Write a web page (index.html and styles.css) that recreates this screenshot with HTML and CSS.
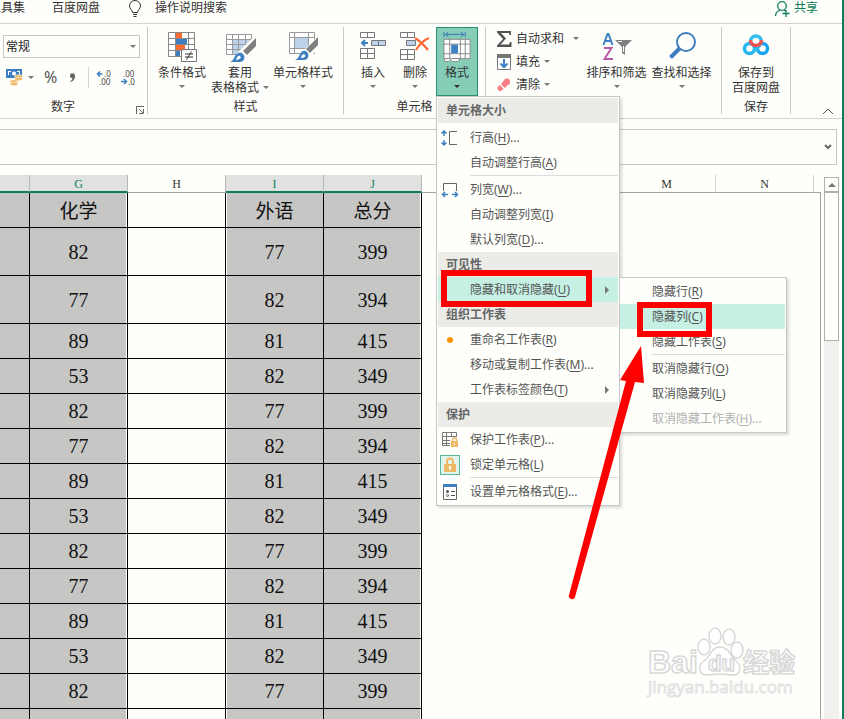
FILE: index.html
```html
<!DOCTYPE html>
<html lang="zh-CN">

<head>
    <meta charset="utf-8">
    <title>成绩表 - Excel</title>
    <link rel="stylesheet" href="styles.css">
</head>

<body>
    <div class="app">
        <nav class="tabs">
            <a href="#" class="tab">工具集</a>
            <a href="#" class="tab">百度网盘</a>
            <a href="#" class="tab tell-me">
                <svg width="16" height="17" viewBox="0 0 16 17" fill="none" stroke="#333"><path d="M5.500 12.500C5.500 10 2.500 9 2.500 6a5.500 5.500 0 0 1 11 0c0 3-3 4-3 6.500zM6 14.500h4M6.500 16.500h3" /></svg>
                操作说明搜索
            </a>
            <a href="#" class="tab share">
                <svg width="16" height="17" viewBox="0 0 16 17" fill="none" stroke="#107c5b" stroke-width="1.300"><circle cx="8" cy="6" r="4.300" /><path d="M1.500 16c0-3 2-5 4.500-6M10 10l1.500 1M12 10v7M8.500 13.500h7" /></svg>
                共享
            </a>
        </nav>

        <div class="ribbon">
            <section class="group number-group">
                <div class="number-body">
                    <div class="format-select">
                        <select aria-label="数字格式">
                            <option>常规</option>
                        </select>
                        <i class="caret"></i>
                    </div>
                    <div class="number-tools">
                        <button class="tool money" aria-label="会计数字格式">
                            <svg width="17" height="17" viewBox="0 0 17 17"><path fill="#3e7fc1" d="M0 0h16v9H0z" /><path fill="#fff" d="M2 2h3v1H3v3H2zM11 2h3v4h-1V3h-2z" /><circle cx="8" cy="4.500" r="2" fill="#fff" /><g fill="#efb965" stroke="#fff" stroke-width=".5"><ellipse cx="12.500" cy="7.500" rx="4" ry="1.700" /><ellipse cx="12.500" cy="10" rx="4" ry="1.700" /><ellipse cx="8" cy="12.500" rx="4" ry="1.700" /><ellipse cx="8" cy="15" rx="4" ry="1.700" /></g></svg>
                            <i class="caret"></i>
                        </button>
                        <button class="tool percent">%</button>
                        <button class="tool comma" aria-label="千位分隔样式">
                            <svg width="7" height="9" viewBox="0 0 7 9"><path fill="#666" d="M1 3a2 2 0 0 1 5-.5C6.300 5 5 8 1.500 9l-.3-.8C3 7.500 3.500 6 3.300 5 2 5 1 4.500 1 3z" /></svg>
                        </button>
                        <span class="tool-line"></span>
                        <button class="tool decimal" aria-label="增加小数位数">
                            <svg width="16" height="16" viewBox="0 0 16 16"><path d="M6.500 4H1.500M4 1.500L1.500 4 4 6.500" fill="none" stroke="#3e7fc1" stroke-width="1.500" /><text x="8" y="7">.0</text><text x="3" y="15">.00</text></svg>
                        </button>
                        <button class="tool decimal" aria-label="减少小数位数">
                            <svg width="16" height="16" viewBox="0 0 16 16"><path d="M1 11.500h5.500M4 9l2.500 2.500L4 14" fill="none" stroke="#3e7fc1" stroke-width="1.500" /><text x="3" y="7">.00</text><text x="8" y="15">.0</text></svg>
                        </button>
                    </div>
                </div>
                <div class="group-name">数字
                    <button class="launcher" aria-label="数字格式设置">
                        <svg width="8" height="8" viewBox="0 0 8 8" fill="none" stroke="#666"><path d="M.5 8V.5H8M3 3l4 4M7.500 3v4.500H3" /></svg>
                    </button>
                </div>
            </section>

            <section class="group">
                <div class="group-body styles-body">
                    <button class="big">
                        <svg width="30" height="30" viewBox="0 0 30 30"><path fill="#fff" stroke="#888" d="M1.500.500h26v24h-26zM8.500 0v24M21.500 0v24M1.500 6.500h26M1.500 12.500h26M1.500 18.500h26" /><path fill="#ff6a33" d="M9 1h6v5H9zM9 13h9v5H9z" /><path fill="#3e7fc1" d="M9 7h11v5H9zM9 19h4v5H9z" /><path fill="#fff" stroke="#777" d="M14.500 17.500h15v12h-15z" /><path stroke="#333" d="M18 22h8M18 25h8M24.500 19.500l-5 8" /></svg>
                        <span>条件格式</span>
                        <i class="caret"></i>
                    </button>
                    <button class="big">
                        <svg width="30" height="30" viewBox="0 0 30 30"><path fill="#fff" d="M1 2h26v20H1z" /><path fill="#bcd2eb" d="M8 8h19v14H8z" /><path fill="none" stroke="#999" d="M1.500 2.500h25v20h-25zM7.500 2v20M13.500 2v20M20.500 2v20M1 7.500h25M1 12.500h25M1 17.500h25" /><path fill="#fefffb" d="M31 3L14 19l-9 11h14l12-12z" /><path fill="#808080" d="M31 6v8l-9 9-4-4z" /><path fill="#3e7fc1" d="M5 30c3-1 4-4 5-6s5-5 8-2 1 8-3 8z" /><path fill="#fefffb" d="M11 28c.5-3 2-4 3.500-4.500l1.500 2c-1 1.500-3 2.500-5 2.500z" /></svg>
                        <span>套用</span>
                        <span class="with-caret">表格格式 <i class="caret"></i></span>
                    </button>
                    <button class="big wide">
                        <svg width="30" height="30" viewBox="0 0 30 30"><path fill="#fff" stroke="#999" d="M1.500.5h25v21h-25zM6.500 0v21M20.500 0v21M1 5.500h25M1 16.500h25" /><path fill="#bcd2eb" d="M7 6h13v10H7z" /><path fill="#fefffb" d="M31 3L17 17l-11 11h13l12-12z" /><path fill="#808080" d="M30 5v8l-8 8-4-4z" /><path fill="#3e7fc1" d="M7 28c3-1 4-4 5-6s4-5 7-2 1 8-3 8z" /><path fill="#fefffb" d="M13 26c.5-3 1.500-3.500 3-4l1.500 2c-1 1.500-2.500 2-4.500 2z" /></svg>
                        <span>单元格样式</span>
                        <i class="caret"></i>
                    </button>
                </div>
                <div class="group-name">样式</div>
            </section>

            <section class="group">
                <div class="group-body cells-body">
                    <button class="big narrow">
                        <svg width="27" height="30" viewBox="0 0 27 30"><path fill="#fff" stroke="#777" d="M.5.500h14v5H.5zM7.500.5v5M.5 16.500h14v10H.5zM7.500 16.500v10M.5 21.500h14" /><path fill="#bcd2eb" stroke="#777" d="M11.500 8.500h14v5h-14zM18.500 8.500v5" /><path fill="none" stroke="#3e7fc1" stroke-width="2" d="M8 11H2M5 8l-3 3 3 3" /></svg>
                        <span>插入</span>
                        <i class="caret"></i>
                    </button>
                    <button class="big narrow">
                        <svg width="30" height="30" viewBox="0 0 30 30"><path fill="#fff" stroke="#777" d="M.5.500h14v5H.5zM7.500.5v5M.5 17.500h14v10H.5zM7.500 17.500v10M.5 22.500h14" /><path fill="#bcd2eb" stroke="#777" d="M6.500 8.500h9v5h-9z" /><path fill="none" stroke="#ff6a33" stroke-width="2.200" d="M15 6c5 3 9 7 13 12M29 6c-5 2-10 7-13 12" /></svg>
                        <span>删除</span>
                        <i class="caret"></i>
                    </button>
                    <div class="menu-anchor">
                        <button class="big narrow open" aria-haspopup="true" aria-expanded="true">
                            <svg width="30" height="31" viewBox="0 0 30 31"><path fill="none" stroke="#3672b9" d="M1.500 0v5M23.500 0v5M3 2.500h19M6 0L3 2.500 6 5M19 0l3 2.500L19 5" /><path fill="#fff" stroke="#888" d="M1.500 7.500h27v20h-27zM7.500 7v20M18.500 7v20M23.500 7v20M1 12.500h27M1 22.500h27" /><path fill="#3e7fc1" d="M9 13h7v9H9z" /><path fill="#fff" stroke="#888" d="M2 27.500h5.500c1 0 1-1 2 0h9l-3 3h-5l-2-2-2 2H2z" /></svg>
                            <span>格式</span>
                            <i class="caret"></i>
                        </button>

                        <ul class="menu format-menu">
                            <li class="menu-title first">单元格大小</li>
                            <li><button class="item">
                                <span class="icon"><svg width="18" height="16" viewBox="0 0 18 16" fill="none"><path stroke="#666" d="M16 1.500H8.500v13H16" /><path stroke="#3e7fc1" stroke-width="1.500" d="M3 1v5M3 10v5M.5 3.500L3 1l2.500 2.500M.5 12.500L3 15l2.500-2.500" /></svg></span>行高(<u>H</u>)...</button></li>
                            <li><button class="item"><span class="icon"></span>自动调整行高(<u>A</u>)</button></li>
                            <li class="line"></li>
                            <li><button class="item">
                                <span class="icon"><svg width="18" height="16" viewBox="0 0 18 16" fill="none"><path stroke="#666" d="M2.500 9V1.500h13V9" /><path stroke="#3e7fc1" stroke-width="1.500" d="M1.500 12.500H7M11 12.500h5.500M4 10l-2.500 2.500L4 15M14 10l2.500 2.500L14 15" /></svg></span>列宽(<u>W</u>)...</button></li>
                            <li><button class="item"><span class="icon"></span>自动调整列宽(<u>I</u>)</button></li>
                            <li><button class="item"><span class="icon"></span>默认列宽(<u>D</u>)...</button></li>
                            <li class="menu-title">可见性</li>
                            <li class="has-sub">
                                <button class="item active" aria-haspopup="true"><span class="icon"></span>隐藏和取消隐藏(<u>U</u>)<i class="arrow"></i></button>
                                <ul class="menu sub-menu">
                                    <li><button class="item">隐藏行(<u>R</u>)</button></li>
                                    <li><button class="item active">隐藏列(<u>C</u>)</button></li>
                                    <li><button class="item">隐藏工作表(<u>S</u>)</button></li>
                                    <li class="line"></li>
                                    <li><button class="item">取消隐藏行(<u>O</u>)</button></li>
                                    <li><button class="item">取消隐藏列(<u>L</u>)</button></li>
                                    <li><button class="item" disabled>取消隐藏工作表(<u>H</u>)...</button></li>
                                </ul>
                            </li>
                            <li class="menu-title">组织工作表</li>
                            <li><button class="item"><span class="icon"><i class="dot"></i></span>重命名工作表(<u>R</u>)</button></li>
                            <li><button class="item"><span class="icon"></span>移动或复制工作表(<u>M</u>)...</button></li>
                            <li><button class="item"><span class="icon"></span>工作表标签颜色(<u>T</u>)<i class="arrow"></i></button></li>
                            <li class="menu-title">保护</li>
                            <li><button class="item">
                                <span class="icon"><svg width="18" height="17" viewBox="0 0 18 17"><path fill="none" stroke="#777" d="M1.500 1.500h14v11H1.500zM5.500 1v14M10.500 1v11M1 5.500h15M1 9.500h15M1.500 12v3M1 14.500h8" /><path fill="#fff" d="M9 6h9v11H9z" /><path fill="none" stroke="#efb965" stroke-width="1.500" d="M11.500 11V9a2 2 0 0 1 4 0v2" /><path fill="#efb965" d="M10 10h7v6h-7z" /><path fill="#fff" d="M13 12h1v2h-1z" /></svg></span>保护工作表(<u>P</u>)...</button></li>
                            <li><button class="item">
                                <span class="icon checked"><svg width="12" height="16" viewBox="0 0 12 16"><path fill="none" stroke="#efb965" stroke-width="2" d="M3 8V4.500a3 3 0 0 1 6 0V8" /><path fill="#efb965" d="M0 7h12v8H0z" /><path fill="#fff" d="M5 9h2v2l-.5 2h-1L5 11z" /></svg></span>锁定单元格(<u>L</u>)</button></li>
                            <li class="line"></li>
                            <li><button class="item">
                                <span class="icon"><svg width="14" height="16" viewBox="0 0 14 16"><path fill="#fff" stroke="#666" d="M.5.500h13v15H.5z" /><path fill="#3e7fc1" d="M0 0h14v3H0z" /><path stroke="#555" fill="none" d="M8 7.500h4M8 11.500h4" /><circle cx="4.500" cy="7.500" r="1.500" fill="#555" /><circle cx="4.500" cy="11.500" r="1" fill="none" stroke="#555" /></svg></span>设置单元格格式(<u>E</u>)...</button></li>
                        </ul>
                    </div>
                </div>
                <div class="group-name">单元格</div>
            </section>

            <section class="group">
                <div class="group-body edit-body">
                    <div class="small-list">
                        <button class="small">
                            <svg width="16" height="16" viewBox="0 0 16 16"><path fill="#555" d="M1 0h14v4h-1.500L13 2H5l5 5.500L4.500 13.500H13l1-2.500h1.500v5H1v-1.500l6-6.500-6-6.500z" /></svg>
                            自动求和 <i class="caret far"></i>
                        </button>
                        <button class="small">
                            <svg width="16" height="16" viewBox="0 0 16 16"><path fill="#fff" stroke="#777" d="M1.500.5h13v15h-13z" /><path fill="#777" d="M1 0h14v4H1z" /><path fill="none" stroke="#3e7fc1" stroke-width="2" d="M8 5v8M4.500 9.500L8 13l3.500-3.500" /></svg>
                            填充 <i class="caret"></i>
                        </button>
                        <button class="small">
                            <svg width="16" height="16" viewBox="0 0 16 16"><path fill="#fa7f83" d="M9.500 1.500h3l1.500 2v3L8.500 11 5 7z" /><path fill="#fa7f83" d="M4 8l3.500 4-2.500 2H3L1.500 12v-2z" /></svg>
                            清除 <i class="caret"></i>
                        </button>
                    </div>
                    <button class="big medium">
                        <svg width="30" height="30" viewBox="0 0 30 30"><path fill="none" stroke="#3e7fc1" stroke-width="2" d="M1.500 13L5.500 2h1l4 11M3 9h6" /><path fill="none" stroke="#b95aa9" stroke-width="2" d="M2 16h7.500L2.500 27H11" /><path fill="#808080" d="M13 8h17l-7 7v8l-3-2v-6z" /><path fill="#fff" d="M15.500 9h5l-1 1h-2.500zM21 14h1v6h-1z" /></svg>
                        <span>排序和筛选</span>
                        <i class="caret"></i>
                    </button>
                    <button class="big medium">
                        <svg width="30" height="30" viewBox="0 0 30 30" fill="none" stroke="#3e7fc1"><circle cx="19" cy="10" r="9" stroke-width="2" /><path stroke-width="4" d="M13 16L3.500 25.500" /></svg>
                        <span>查找和选择</span>
                        <i class="caret"></i>
                    </button>
                </div>
                <div class="group-name">编辑</div>
            </section>

            <section class="group">
                <div class="group-body">
                    <button class="big wide">
                        <svg width="28" height="30" viewBox="0 0 28 30" fill="none" stroke-width="3.500"><circle cx="7.500" cy="16.500" r="5" stroke="#24b5f2" /><circle cx="20.500" cy="16.500" r="5" stroke="#18a5f2" /><path stroke="#31bfee" d="M8.500 10a5.500 5.500 0 0 1 11-1" /><path stroke="#31bfee" d="M11 20l7-7" /><path stroke="#ef5350" d="M8.500 8a5.500 5.500 0 1 0 11 0" /></svg>
                        <span>保存到</span>
                        <span>百度网盘</span>
                    </button>
                </div>
                <div class="group-name">保存</div>
            </section>
            <button class="collapse" aria-label="折叠功能区">
                <svg width="12" height="7" viewBox="0 0 12 7" fill="none" stroke="#555"><path d="M1 6l5-5 5 5" /></svg>
            </button>
        </div>

        <div class="formula">
            <input type="text" aria-label="编辑栏">
            <button class="expand" aria-label="展开编辑栏">
                <svg width="8" height="6" viewBox="0 0 8 6" fill="none" stroke="#666" stroke-width="2"><path d="M1 1l3 3 3-3" /></svg>
            </button>
        </div>

        <main class="sheet">
            <div class="grid">
                <table>
                    <colgroup>
                        <col class="col-f">
                        <col span="8">
                    </colgroup>
                    <thead>
                        <tr><th class="on"></th><th class="on">G</th><th>H</th><th class="on">I</th><th class="on">J</th><th></th><th></th><th>M</th><th>N</th></tr>
                    </thead>
                    <tbody>
                        <tr class="names"><td></td><td>化学</td><td></td><td>外语</td><td>总分</td></tr>
                        <tr class="tall"><td></td><td>82</td><td></td><td>77</td><td>399</td></tr>
                        <tr class="tall"><td></td><td>77</td><td></td><td>82</td><td>394</td></tr>
                        <tr><td></td><td>89</td><td></td><td>81</td><td>415</td></tr>
                        <tr><td></td><td>53</td><td></td><td>82</td><td>349</td></tr>
                        <tr><td></td><td>82</td><td></td><td>77</td><td>399</td></tr>
                        <tr><td></td><td>77</td><td></td><td>82</td><td>394</td></tr>
                        <tr><td></td><td>89</td><td></td><td>81</td><td>415</td></tr>
                        <tr><td></td><td>53</td><td></td><td>82</td><td>349</td></tr>
                        <tr><td></td><td>82</td><td></td><td>77</td><td>399</td></tr>
                        <tr><td></td><td>77</td><td></td><td>82</td><td>394</td></tr>
                        <tr><td></td><td>89</td><td></td><td>81</td><td>415</td></tr>
                        <tr><td></td><td>53</td><td></td><td>82</td><td>349</td></tr>
                        <tr><td></td><td>82</td><td></td><td>77</td><td>399</td></tr>
                        <tr><td></td><td></td><td></td><td></td><td></td></tr>
                    </tbody>
                </table>
            </div>
            <div class="scrollbar">
                <button class="scroll-up" aria-label="向上滚动"><i></i></button>
                <div class="thumb"></div>
            </div>
        </main>

        <!-- tutorial marks -->
        <div class="mark mark-hide"></div>
        <div class="mark mark-column"></div>
        <svg class="pointer" width="80" height="260" viewBox="0 0 80 260" fill="#f00"><path d="M73 5l3 37-9-1-60 215a3 3 0 0 1-6-2L58 40l-6-1z" /></svg>
        <svg class="watermark" width="156" height="76" viewBox="0 0 156 76">
            <g fill="#fff" stroke="#d8d8d8" stroke-width="1.500">
                <text class="wm-bold" x="4" y="47" font-size="32">Bai</text>
                <ellipse cx="60" cy="21" rx="6" ry="8" />
                <ellipse cx="71" cy="10" rx="6" ry="8" />
                <ellipse cx="85" cy="11" rx="6" ry="8" />
                <ellipse cx="93" cy="24" rx="6" ry="8" />
                <path d="M76 21c9 0 10 9 16 14s5 14-3 14c-5 0-8-1-13-1s-8 1-13 1c-8 0-10-9-3-14s7-14 16-14z" />
                <text class="wm-bold" x="64" y="45" font-size="22">du</text>
                <text class="wm-bold" x="99" y="46" font-size="26">经验</text>
            </g>
            <text class="wm-url" x="4" y="67" font-size="17">jingyan.baidu.com</text>
        </svg>
    </div>
</body>

</html>
```
FILE: styles.css
```css
* {
    box-sizing: border-box;
}

body {
    margin: 0;
    background: #fefffb;
    color: #333;
    font: 12px/15px "Noto Sans", "Noto Sans CJK SC", sans-serif;
}

button {
    border: 0;
    padding: 0;
    background: none;
    color: inherit;
    font: inherit;
    cursor: pointer;
}

svg {
    display: block;
    flex: none;
    overflow: visible;
}

ul {
    list-style: none;
    margin: 0;
    padding: 0;
}

.app {
    position: relative;
    display: flex;
    flex-direction: column;
    height: 100vh;
    overflow: hidden;
    border-right: 2px solid #107c5b;
}

/* tabs */
.tabs {
    display: flex;
    gap: 27px;
    height: 24px;
    margin-left: -11px;
    padding-right: 24px;
    border-bottom: 1px solid #d2d2d0;
}

.tab {
    color: #333;
    text-decoration: none;
    white-space: nowrap;
}

.tell-me {
    display: flex;
    gap: 12px;
}

.share {
    display: flex;
    gap: 4px;
    margin-left: auto;
    color: #107c5b;
}

/* ribbon */
.ribbon {
    display: flex;
    height: 95px;
    padding-top: 3px;
    border-bottom: 1px solid #d2d2d0;
}

.group {
    display: flex;
    flex-direction: column;
    justify-content: space-between;
    height: 87px;
    border-right: 1px solid #c8c8c6;
}

.group-body {
    display: flex;
    height: 69px;
}

.group-name {
    text-align: center;
}

.caret {
    border: 3px solid transparent;
    border-top-color: #777;
    border-bottom: 0;
}

.big {
    display: flex;
    flex-direction: column;
    align-items: center;
    width: 58px;
    padding-top: 5px;
    white-space: nowrap;
}

.big svg {
    height: 30px;
    margin-bottom: 3px;
}

.big > .caret {
    margin-top: 5px;
}

.with-caret {
    display: flex;
    align-items: center;
    gap: 4px;
}

.wide {
    width: 68px;
}

.medium {
    width: 65px;
}

.narrow {
    width: 42px;
}

.open {
    height: 69px;
    background: #86cdb8;
    outline: 1px solid #2b9070;
    outline-offset: -1px;
}

.open .caret {
    border-top-color: #333;
}

.number-group {
    width: 148px;
}

.number-body {
    padding: 8px 7px 0 3px;
}

.format-select {
    position: relative;
}

.format-select select {
    display: block;
    appearance: none;
    width: 100%;
    height: 23px;
    padding: 0 2px;
    border: 1px solid #c6c6c4;
    border-radius: 0;
    background: #fefffb;
    color: #222;
    font: inherit;
}

.format-select .caret {
    position: absolute;
    right: 4px;
    top: 10px;
}

.number-tools {
    display: flex;
    align-items: center;
    height: 21px;
    margin-top: 9px;
    padding-left: 3px;
}

.money {
    display: flex;
    align-items: center;
    gap: 5px;
    margin-right: 10px;
}

.percent {
    color: #555;
    font-size: 16px;
}

.comma {
    margin: 0 12px;
}

.tool-line {
    height: 21px;
    margin-right: 7px;
    border-left: 1px solid #d6d6d4;
}

.decimal {
    margin-right: 8px;
}

.decimal text {
    fill: #444;
    font: 8px "Noto Sans", sans-serif;
}

.number-group .group-name {
    display: flex;
    justify-content: flex-end;
    align-items: flex-end;
    gap: 61px;
    padding-right: 3px;
}

.styles-body {
    padding: 0 6px 0 5px;
}

.cells-body {
    padding: 0 7px 0 8px;
}

.edit-body {
    padding: 0 7px 0 10px;
}

.small-list {
    width: 88px;
}

.small {
    display: flex;
    align-items: center;
    gap: 4px;
    height: 23px;
    white-space: nowrap;
}

.small .far {
    margin-left: 5px;
}

.collapse {
    align-self: flex-end;
    margin: 0 8px 3px auto;
}

/* menus */
.menu-anchor,
.has-sub {
    position: relative;
}

.menu {
    position: absolute;
    padding: 1px;
    border: 1px solid #c6c6c6;
    background: #fefffb;
    color: #555;
    box-shadow: 2px 2px 3px rgba(0, 0, 0, 0.15);
}

.format-menu {
    z-index: 2;
    top: 100%;
    left: 0;
    width: 184px;
}

.sub-menu {
    top: 0;
    left: 100%;
    width: 168px;
    margin-left: 1px;
    padding: 1px 1px 1px 0;
}

.menu-title {
    height: 25px;
    padding-left: 8px;
    background: #ebebe8;
    color: #666;
    font-weight: bold;
    line-height: 25px;
}

.menu-title.first {
    margin-bottom: 2px;
}

.item {
    display: flex;
    align-items: center;
    width: 100%;
    height: 25px;
    padding-left: 2px;
    text-align: left;
    white-space: nowrap;
}

.sub-menu .item {
    padding-left: 32px;
}

.item.active {
    background: #c5f0e3;
}

.item:disabled {
    color: #b1b1b1;
}

.item u {
    text-underline-offset: 2px;
}

.icon {
    display: flex;
    align-items: center;
    justify-content: center;
    width: 20px;
    height: 20px;
    margin-right: 10px;
}

.checked {
    border: 1px solid #55b89a;
    background: #dff5ed;
}

.dot {
    width: 6px;
    height: 6px;
    border-radius: 50%;
    background: #ff9500;
}

.arrow {
    margin: 0 9px 0 auto;
    border: 4px solid transparent;
    border-left-color: #777;
    border-right: 0;
}

.line {
    height: 2px;
    margin-left: 32px;
    border-top: 1px solid #dcdde0;
}

/* formula bar */
.formula {
    display: flex;
    flex: none;
    height: 36px;
    margin: 10px 5px 10px 0;
    border: 1px solid #c6c6c4;
    border-left: 0;
}

.formula input {
    flex: 1;
    border: 0;
    background: none;
}

.expand {
    width: 16px;
    padding-left: 4px;
}

/* sheet */
.sheet {
    display: flex;
    flex: 1;
    min-height: 0;
}

.grid {
    display: flex;
    flex: 1;
    align-items: flex-start;
    overflow: hidden;
}

.grid::after {
    content: "";
    flex: 1;
    height: 100%;
    margin-top: 17px;
    border: 1px solid #a5a6a3;
    border-width: 1px 1px 0 0;
}

table {
    flex: none;
    width: 814px;
    table-layout: fixed;
    border-collapse: separate;
    border-spacing: 0;
}

.col-f {
    width: 30px;
}

th {
    height: 18px;
    padding: 3px 0 0;
    border-right: 1px solid #d0d0ce;
    border-bottom: 1px solid #a5a6a3;
    font: 12px/13px "Liberation Serif", serif;
    vertical-align: top;
}

th:nth-child(3) {
    border-right-color: #b8b8b6;
}

th.on {
    border-right-color: #b8b8b6;
    border-bottom: 2px solid #107c5b;
    background: #e1e1e0;
    color: #107c5b;
}

td {
    height: 35px;
    padding: 0;
    border: 1px solid #000;
    border-width: 0 1px 1px 0;
    background: #c6c6c5;
    color: #111;
    font: 20px/24px "Liberation Serif", "Noto Sans CJK SC", serif;
    text-align: center;
}

td:nth-child(2),
td:nth-child(5) {
    box-shadow: inset -1px 0 #fefffb;
}

td:nth-child(3) {
    background: #fefffb;
}

td:nth-child(4) {
    box-shadow: inset 1px 0 #fefffb;
}

.names td {
    padding-top: 4px;
    font-size: 19px;
}

.tall td {
    height: 48px;
}

.scrollbar {
    display: flex;
    flex-direction: column;
    width: 15px;
    margin: 2px 3px 0;
    background: #f0f1ee;
}

.scroll-up {
    display: flex;
    align-items: center;
    justify-content: center;
    height: 15px;
    border: 1px solid #b0b0ae;
    background: #fefffb;
}

.scroll-up i {
    border: 4px solid transparent;
    border-top: 0;
    border-bottom-color: #777;
}

.thumb {
    height: 149px;
    border: 1px solid #b0b0ae;
    background: #fefffb;
}

/* marks drawn over the window */
.mark {
    position: absolute;
    z-index: 3;
    border: 6px solid #f00;
}

.mark-hide {
    top: 270px;
    left: 441px;
    width: 151px;
    height: 37px;
}

.mark-column {
    top: 302px;
    left: 637px;
    width: 75px;
    height: 35px;
}

.pointer {
    position: absolute;
    z-index: 3;
    top: 341px;
    left: 568px;
}

.watermark {
    position: absolute;
    right: 42px;
    bottom: 17px;
}

.wm-bold {
    font-family: "Liberation Sans", "Noto Sans CJK SC", sans-serif;
    font-weight: bold;
}

.wm-url {
    fill: #fff;
    stroke: #e2e2e2;
    font-family: "Open Sans", sans-serif;
}
```
